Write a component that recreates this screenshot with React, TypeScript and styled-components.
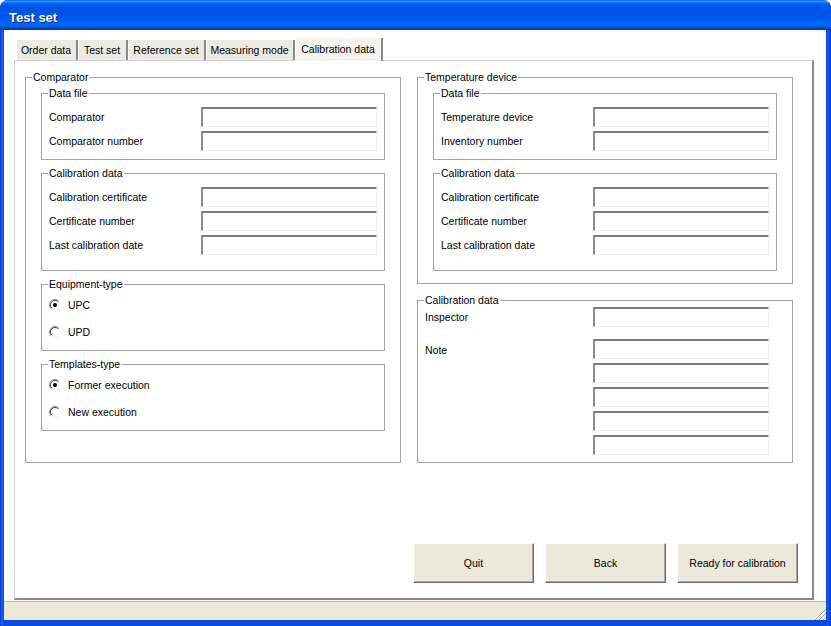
import React from 'react';
import styled, { createGlobalStyle } from 'styled-components';

const GlobalStyle = createGlobalStyle`
    html, body {
        margin: 0;
        padding: 0;
        background: #fff;
    }
    body {
        font-family: "Liberation Sans", Arial, sans-serif;
        font-size: 10.5px;
        color: #000;
    }
    * {
        box-sizing: border-box;
    }
`;

const Window = styled.div`
    width: 831px;
    height: 626px;
    display: flex;
    flex-direction: column;
    background: linear-gradient(to right, #0831d9 0px, #1b62ea 2px, #0a4be0 4px, #0a4be0 calc(100% - 5px), #1459e6 calc(100% - 3px), #0831d9 100%);
    border-radius: 8px 8px 0 0;
    overflow: hidden;
`;

const TitleBar = styled.div`
    height: 30px;
    flex: none;
    display: flex;
    align-items: center;
    padding: 5px 0 0 9px;
    color: #fff;
    font-weight: bold;
    font-size: 13px;
    text-shadow: 1px 1px 0 #0f1f8a;
    background: linear-gradient(180deg, #0058ee 0%, #3593ff 4%, #288eff 6%, #127dff 8%, #036ffc 10%, #0262ee 14%, #0057e5 20%, #0054e3 24%, #0055eb 56%, #005bf5 66%, #026afe 76%, #0062ef 86%, #0052d6 92%, #0040ab 96%, #003092 100%);
`;

const Client = styled.div`
    flex: 1;
    display: flex;
    flex-direction: column;
    margin: 0 5px 6px 4px;
    background: #fff;
`;

const Body = styled.div`
    flex: 1;
    display: flex;
    flex-direction: column;
    padding: 8px 12px 0 10px;
`;

const TabStrip = styled.div`
    height: 22px;
    display: flex;
    align-items: flex-end;
    padding-left: 2px;
    position: relative;
    z-index: 1;
`;

const Tab = styled.div<{ $active?: boolean; $w: number }>`
    width: ${p => p.$w}px;
    height: ${p => (p.$active ? 23 : 20)}px;
    margin-bottom: ${p => (p.$active ? -1 : 0)}px;
    display: flex;
    align-items: center;
    justify-content: center;
    padding: ${p => (p.$active ? '0 1px 2px 0' : '0 1px 0 0')};
    border-left: 1px solid #fff;
    border-right: 2px solid #8a8a86;
    background: ${p => (p.$active ? '#f4f3ee' : '#ecebe3')};
    white-space: nowrap;
`;

const Panel = styled.div`
    flex: 1;
    display: flex;
    flex-direction: column;
    border-top: 1px solid #d4d4d4;
    border-left: 1px solid #d4d4d4;
    border-right: 2px solid #8a8a8a;
    border-bottom: 2px solid #8a8a8a;
    padding: 16px 14px 15px 10px;
    background: #fff;
`;

const Columns = styled.div`
    display: grid;
    grid-template-columns: 376px 376px;
    column-gap: 16px;
    align-items: start;
`;

const Column = styled.div`
    display: flex;
    flex-direction: column;
    gap: 16px;
`;

const Group = styled.div<{ $h: number }>`
    position: relative;
    height: ${p => p.$h}px;
    border: 1px solid #a3a3a3;
`;

const Legend = styled.span`
    position: absolute;
    top: -7px;
    left: 6px;
    padding: 0 1px;
    line-height: 13px;
    background: #fff;
    white-space: nowrap;
`;

const Stack = styled.div`
    display: flex;
    flex-direction: column;
    gap: 13px;
    padding: 15px;
`;

const Rows = styled.div<{ $top?: number; $right?: number }>`
    display: flex;
    flex-direction: column;
    gap: 4px;
    padding: ${p => p.$top ?? 13}px ${p => p.$right ?? 7}px 0 7px;
`;

const Row = styled.div`
    display: flex;
    align-items: center;
    height: 20px;
`;

const Label = styled.span`
    flex: 1;
    white-space: nowrap;
`;

const Field = styled.input`
    width: 176px;
    height: 20px;
    margin: 0;
    padding: 0 3px;
    font: inherit;
    background: #fff;
    border-top: 2px solid #7c7c7c;
    border-left: 2px solid #8c8c8c;
    border-right: 1px solid #eeeeee;
    border-bottom: 1px solid #eeeeee;
    outline: none;
`;

const NoteRow = styled.div`
    display: flex;
    align-items: flex-start;
    margin-top: 12px;
`;

const NoteLabel = styled.span`
    flex: 1;
    line-height: 20px;
    padding-top: 1px;
`;

const NoteFields = styled.div`
    display: flex;
    flex-direction: column;
    gap: 4px;
`;

const RadioList = styled.div`
    display: flex;
    flex-direction: column;
    gap: 11px;
    padding: 12px 7px 0 7px;
`;

const RadioRow = styled.label`
    display: flex;
    align-items: center;
    gap: 7px;
    height: 16px;
`;

const ButtonRow = styled.div`
    margin-top: auto;
    display: flex;
    justify-content: flex-end;
    gap: 11px;
`;

const Button = styled.button`
    width: 121px;
    height: 40px;
    margin: 0;
    padding: 0;
    font: inherit;
    color: #000;
    background: #ece9db;
    border-top: 1px solid #fff;
    border-left: 1px solid #fff;
    border-right: 1px solid #6f6d64;
    border-bottom: 1px solid #6f6d64;
    box-shadow: inset -1px -1px 0 #aca899;
`;

const StatusBar = styled.div`
    height: 20px;
    flex: none;
    display: flex;
    justify-content: flex-end;
    align-items: flex-end;
    background: linear-gradient(#ffffff 0 1px, #bdbab0 1px 2px, #ece9d8 2px);
`;

const Radio = ({ checked }: { checked?: boolean }) => (
    <svg width="12" height="12" viewBox="0 0 12 12">
        <circle cx="6" cy="6" r="5.5" fill="#fff" />
        <path d="M9.9 2.1 A5.5 5.5 0 0 0 2.1 9.9" fill="none" stroke="#8e8e8e" strokeWidth="1" />
        <path d="M9.2 2.8 A4.5 4.5 0 0 0 2.8 9.2" fill="none" stroke="#4a4a4a" strokeWidth="1" />
        <path d="M9.9 2.1 A5.5 5.5 0 0 1 2.1 9.9" fill="none" stroke="#f2f2f2" strokeWidth="1" />
        {checked && <circle cx="6" cy="6" r="2" fill="#000" />}
    </svg>
);

const Grip = () => (
    <svg width="12" height="12" viewBox="0 0 12 12">
        <path d="M11 1 L1 11 M11 5 L5 11 M11 9 L9 11" stroke="#fff" strokeWidth="1" />
        <path d="M12 1 L1 12 M12 5 L5 12 M12 9 L9 12" stroke="#a9a699" strokeWidth="1" />
    </svg>
);

const FieldRow = ({ label }: { label: string }) => (
    <Row>
        <Label>{label}</Label>
        <Field readOnly />
    </Row>
);

const DataGroups = ({ first, second }: { first: string; second: string }) => (
    <>
        <Group $h={67}>
            <Legend>Data file</Legend>
            <Rows>
                <FieldRow label={first} />
                <FieldRow label={second} />
            </Rows>
        </Group>
        <Group $h={98}>
            <Legend>Calibration data</Legend>
            <Rows>
                <FieldRow label="Calibration certificate" />
                <FieldRow label="Certificate number" />
                <FieldRow label="Last calibration date" />
            </Rows>
        </Group>
    </>
);

const tabs = [
    { name: 'Order data', w: 62 },
    { name: 'Test set', w: 50 },
    { name: 'Reference set', w: 78 },
    { name: 'Measuring mode', w: 89 },
    { name: 'Calibration data', w: 88 },
];

export default () => {
    return (
        <Window>
            <GlobalStyle />
            <TitleBar>Test set</TitleBar>
            <Client>
                <Body>
                    <TabStrip>
                        {tabs.map(t => (
                            <Tab key={t.name} $w={t.w} $active={t.name === 'Calibration data'}>{t.name}</Tab>
                        ))}
                    </TabStrip>
                    <Panel>
                        <Columns>
                            <Column>
                                <Group $h={386}>
                                    <Legend>Comparator</Legend>
                                    <Stack>
                                        <DataGroups first="Comparator" second="Comparator number" />
                                        <Group $h={67}>
                                            <Legend>Equipment-type</Legend>
                                            <RadioList>
                                                <RadioRow><Radio checked />UPC</RadioRow>
                                                <RadioRow><Radio />UPD</RadioRow>
                                            </RadioList>
                                        </Group>
                                        <Group $h={67}>
                                            <Legend>Templates-type</Legend>
                                            <RadioList>
                                                <RadioRow><Radio checked />Former execution</RadioRow>
                                                <RadioRow><Radio />New execution</RadioRow>
                                            </RadioList>
                                        </Group>
                                    </Stack>
                                </Group>
                            </Column>
                            <Column>
                                <Group $h={207}>
                                    <Legend>Temperature device</Legend>
                                    <Stack>
                                        <DataGroups first="Temperature device" second="Inventory number" />
                                    </Stack>
                                </Group>
                                <Group $h={163}>
                                    <Legend>Calibration data</Legend>
                                    <Rows $top={6} $right={23}>
                                        <FieldRow label="Inspector" />
                                    </Rows>
                                    <Rows $top={0} $right={23}>
                                        <NoteRow>
                                            <NoteLabel>Note</NoteLabel>
                                            <NoteFields>
                                                <Field readOnly />
                                                <Field readOnly />
                                                <Field readOnly />
                                                <Field readOnly />
                                                <Field readOnly />
                                            </NoteFields>
                                        </NoteRow>
                                    </Rows>
                                </Group>
                            </Column>
                        </Columns>
                        <ButtonRow>
                            <Button>Quit</Button>
                            <Button>Back</Button>
                            <Button>Ready for calibration</Button>
                        </ButtonRow>
                    </Panel>
                </Body>
                <StatusBar>
                    <Grip />
                </StatusBar>
            </Client>
        </Window>
    );
};
